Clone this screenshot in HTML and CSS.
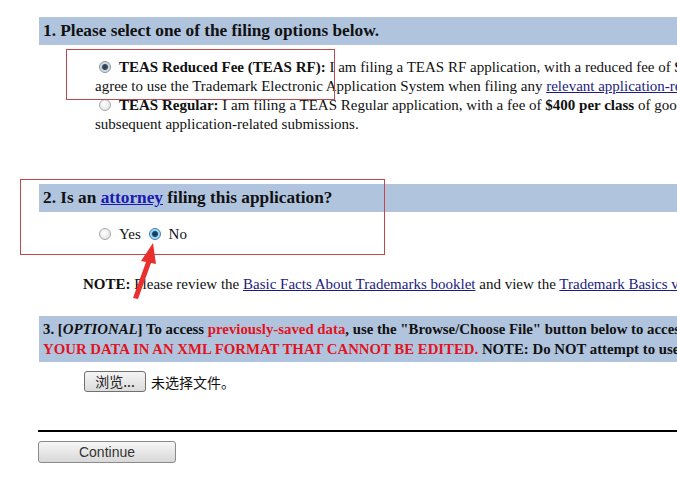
FILE: index.html
```html
<!DOCTYPE html>
<html lang="en">
<head>
    <meta charset="UTF-8">
    <title>TEAS Filing Options</title>
    <link rel="stylesheet" href="styles.css">
</head>
<body>
    <div class="page">
        <!-- Step 1 -->
        <div class="bar">1. Please select one of the filing options below.</div>
        <div class="options">
            <p class="option"><span class="radio checked"></span><b>TEAS Reduced Fee (TEAS RF):</b> I am filing a TEAS RF application, with a reduced fee of <b>$275 per class</b> of goods/services, and I<br>agree to use the Trademark Electronic Application System when filing any <a href="#">relevant application-related submissions</a>.</p>
            <p class="option"><span class="radio"></span><b>TEAS Regular:</b> I am filing a TEAS Regular application, with a fee of <b>$400 per class</b> of goods/services, and I do not agree to file all<br>subsequent application-related submissions.</p>
        </div>

        <!-- Step 2 -->
        <div class="bar bar-two">2. Is an <a href="#">attorney</a> filing this application?</div>
        <div class="choices">
            <span class="radio"></span>Yes
            <span class="radio checked focused"></span>No
        </div>

        <p class="note"><b>NOTE:</b> Please review the <a href="#">Basic Facts About Trademarks booklet</a> and view the <a href="#">Trademark Basics videos</a> before filing.</p>

        <!-- Step 3 -->
        <div class="bar bar-three">3. [<i>OPTIONAL</i>] To access <span class="warn">previously-saved data</span>, use the "Browse/Choose File" button below to access a file.<br><span class="warn">YOUR DATA IN AN XML FORMAT THAT CANNOT BE EDITED.</span> NOTE: Do NOT attempt to use a file that was not previously saved.</div>
        <div class="file-row">
            <span class="browse">浏览...</span>
            <span class="no-file">未选择文件。</span>
        </div>

        <hr class="rule">
        <span class="continue">Continue</span>
    </div>

    <!-- annotations -->
    <div class="mark mark-one"></div>
    <div class="mark mark-two"></div>
    <svg class="arrow" width="40" height="70" viewBox="0 0 40 70">
        <path d="M0 56 L13 20 L8 19 L20 1 L23 22 L18 21 L5 57 Z" fill="#e8312f"/>
    </svg>
</body>
</html>
```

FILE: styles.css
```css
* {
    box-sizing: border-box;
    margin: 0;
    padding: 0;
}

body {
    background: #fff;
    color: #111;
    font-family: 'Liberation Serif', 'Times New Roman', serif;
    font-size: 15px;
    overflow: hidden;
    width: 677px;
    height: 488px;
    position: relative;
}

a {
    color: #1c1c80;
}

.page {
    width: 1200px;
    padding: 17px 0 0 39px;
    white-space: nowrap;
}

/* Section headers */
.bar {
    background: #b0c4de;
    font-weight: bold;
    font-size: 17.3px;
    line-height: 20px;
    padding: 4px 4px;
}

.bar a {
    color: #1a1ab0;
}

.bar-two {
    margin-top: 50px;
}

.bar-three {
    margin-top: 22px;
    font-size: 14.8px;
    padding: 3px 4px;
}

.warn {
    color: #e0141e;
}

/* Step 1 options */
.options {
    margin-top: 13px;
    padding-left: 56px;
    line-height: 19px;
}

.option {
    text-indent: 4px;
}

/* Radio buttons, old style */
.radio {
    display: inline-block;
    width: 12px;
    height: 12px;
    border-radius: 50%;
    border: 1px solid #a8a8a8;
    background: radial-gradient(circle at 40% 40%, #fff 0%, #e6e6e6 70%, #cfcfcf 100%);
    vertical-align: -1px;
    margin-right: 8px;
    text-indent: 0;
}

.radio.checked {
    background: radial-gradient(circle, #2b3a48 0, #3c4e60 2.5px, #c9d3dc 3.5px, #f0f0f0 100%);
    border-color: #8a949e;
}

.radio.focused {
    background: radial-gradient(circle, #0e3550 0, #1c4a6c 2.5px, #8fd0ee 3.5px, #dff2fb 100%);
    border-color: #3c7fb1;
}

/* Step 2 choices */
.choices {
    margin-top: 13px;
    padding-left: 60px;
    line-height: 19px;
}

.choices .checked {
    margin-left: 4px;
}

.note {
    margin-top: 31px;
    padding-left: 44px;
    line-height: 19px;
}

/* File input */
.file-row {
    display: flex;
    align-items: center;
    gap: 5px;
    margin-top: 9px;
    padding-left: 45px;
    font-family: 'Noto Sans CJK SC', sans-serif;
    font-size: 14px;
}

.browse {
    display: inline-block;
    width: 62px;
    height: 21px;
    line-height: 19px;
    text-align: center;
    border: 1px solid #707070;
    border-radius: 3px;
    background: linear-gradient(#f4f4f4, #dcdcdc);
    color: #222;
}

.no-file {
    color: #111;
}

.rule {
    border: none;
    border-top: 2px solid #000;
    margin: 38px 0 0 -1px;
}

.continue {
    display: inline-block;
    margin: 9px 0 0 -1px;
    width: 138px;
    height: 22px;
    line-height: 20px;
    text-align: center;
    font-family: 'Liberation Sans', Arial, sans-serif;
    font-size: 14px;
    color: #333;
    border: 1px solid #8a8a8a;
    border-radius: 3px;
    background: linear-gradient(#f6f6f6, #d8d8d8);
}

/* Red annotation boxes and arrow */
.mark {
    position: absolute;
    border: 1px solid #c0474a;
}

.mark-one {
    left: 66px;
    top: 49px;
    width: 269px;
    height: 51px;
}

.mark-two {
    left: 20px;
    top: 179px;
    width: 365px;
    height: 76px;
}

.arrow {
    position: absolute;
    left: 133px;
    top: 242px;
}
```
